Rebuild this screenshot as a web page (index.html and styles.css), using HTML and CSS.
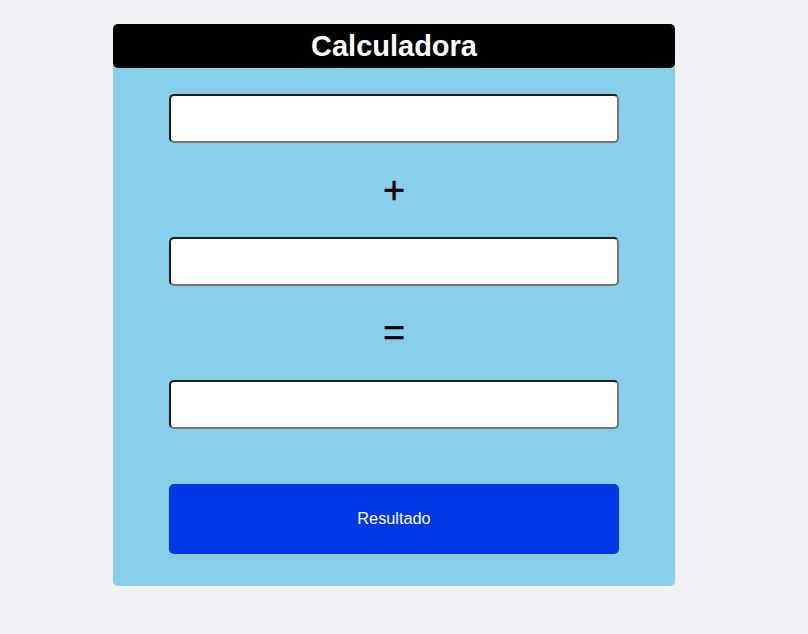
FILE: index.html
```html
<!DOCTYPE html>
<html lang="pt">
<head>
<meta charset="utf-8">
<title>Calculadora</title>
<link rel="stylesheet" href="styles.css">
</head>
<body>
<main class="card">
  <h1 class="card-title">Calculadora</h1>
  <input class="field" type="text">
  <div class="op">+</div>
  <input class="field" type="text">
  <div class="op">=</div>
  <input class="field" type="text">
  <button class="btn" type="button">Resultado</button>
</main>
</body>
</html>
```
FILE: styles.css
```css
html, body {
  margin: 0;
  padding: 0;
}
body {
  background: #f0f0f5;
  font-family: "Liberation Sans", Arial, sans-serif;
  padding: 24px 0 0 113px;
  min-height: 634px;
  box-sizing: border-box;
}
.card {
  width: 562px;
  background: #87ceeb;
  border-radius: 5px;
  display: flex;
  flex-direction: column;
  align-items: center;
  padding-bottom: 32px;
}
.card-title {
  align-self: stretch;
  margin: 0;
  height: 44px;
  line-height: 44px;
  background: #000;
  color: #fff;
  border-radius: 5px;
  text-align: center;
  font-size: 29px;
  font-weight: bold;
}
.field {
  box-sizing: border-box;
  width: 450px;
  height: 49px;
  margin: 26px 0 0;
  padding: 0 8px;
  background: #fff;
  border: 2px solid;
  border-color: #1f1f1f #767676 #767676 #1f1f1f;
  border-radius: 5px;
  font-family: inherit;
  font-size: 16px;
}
.op + .field {
  margin-top: 0;
}
.op {
  height: 94px;
  display: flex;
  align-items: center;
  justify-content: center;
  font-size: 38px;
  color: #000;
  -webkit-text-stroke: 0.4px #000;
}
.btn {
  box-sizing: border-box;
  width: 450px;
  height: 70px;
  margin-top: 55px;
  padding-bottom: 2px;
  border: none;
  border-radius: 5px;
  background: #0038e6;
  color: #fff;
  font-family: inherit;
  font-size: 16.3px;
}
```
